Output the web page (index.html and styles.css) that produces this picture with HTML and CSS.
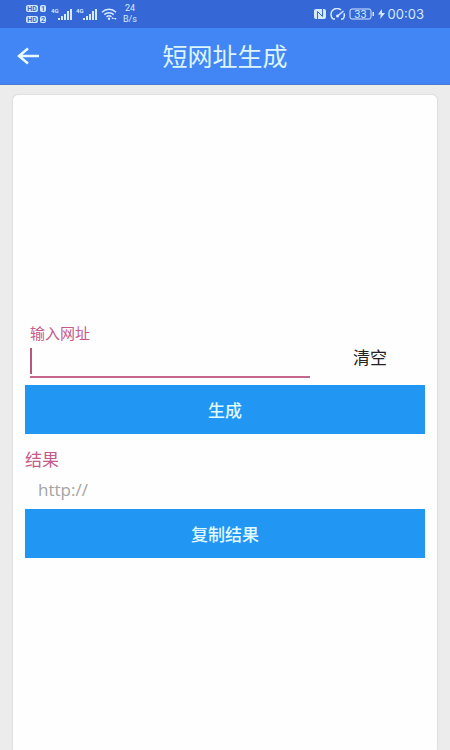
FILE: index.html
```html
<!DOCTYPE html>
<html lang="zh-CN">
<head>
  <meta charset="UTF-8" />
  <meta name="viewport" content="width=device-width, initial-scale=1.0"/>
  <title>短网址生成</title>
  <link rel="stylesheet" href="styles.css">
</head>
<body>

<div class="status-bar">
  <div class="status-left">
    <!-- HD badges -->
    <svg class="icon-hd" width="21" height="20" viewBox="0 0 21 20">
      <g class="badge">
        <rect x="0" y="1" width="12" height="7" rx="2"/>
        <rect x="14" y="1" width="6" height="7" rx="2"/>
        <rect x="0" y="12" width="12" height="7" rx="2"/>
        <rect x="14" y="12" width="6" height="7" rx="2"/>
      </g>
      <g class="badge-text">
        <text x="6" y="7">HD</text>
        <text x="17" y="7">1</text>
        <text x="6" y="18">HD</text>
        <text x="17" y="18">2</text>
      </g>
    </svg>
    <svg width="21" height="14" viewBox="0 0 21 14">
      <text class="net-text" x="0" y="6">4G</text>
      <path class="fill" d="M7 11h2v2H7zM10 9h2v4h-2zM13 7h2v6h-2zM16 4h2v9h-2zM19 2h2v11h-2z"/>
    </svg>
    <svg width="21" height="14" viewBox="0 0 21 14">
      <text class="net-text" x="0" y="6">4G</text>
      <path class="fill" d="M7 11h2v2H7zM10 9h2v4h-2zM13 7h2v6h-2zM16 4h2v9h-2zM19 2h2v11h-2z"/>
    </svg>
    <svg width="16" height="14" viewBox="0 0 16 14">
      <path class="line" d="M1 5.2C5 1.3 11 1.3 15 5.2M3.3 7.6c2.7-2.5 6.7-2.5 9.4 0M5.5 9.8c1.5-1.2 3.5-1.2 5 0"/>
      <circle class="fill" cx="8" cy="11.8" r="1.2"/>
      <path class="fill" d="M10.5 12l1.3-2 1.3 2zM13 11h2.6l-1.3 2z"/>
    </svg>
    <div class="speed"><span>24</span><span>B/s</span></div>
  </div>

  <div class="status-right">
    <svg width="13" height="12" viewBox="0 0 13 12">
      <rect class="fill" x="0" y="1" width="12" height="10" rx="2"/>
      <path class="nfc-gap" d="M3.5 11V3.5l5 5V1"/>
    </svg>
    <svg width="16" height="12" viewBox="0 0 16 12">
      <path class="line" d="M3 11A6 6 0 0 1 11 2M14 5.2A6 6 0 0 1 13 11M3 11h2M11 11h2M7 8.5L13.5 3"/>
      <circle class="fill" cx="7.5" cy="8" r="1.5"/>
    </svg>
    <svg width="26" height="12" viewBox="0 0 26 12">
      <rect class="battery" x="1" y="1" width="21" height="10" rx="2"/>
      <path class="fill" d="M23.5 4H25v4h-1.5z"/>
      <text class="battery-text" x="11.5" y="10">33</text>
    </svg>
    <svg width="7" height="10" viewBox="0 0 7 10">
      <path class="fill" d="M4 0L0 5.5h2.8L2.2 10 7 4H4z"/>
    </svg>
    <time class="clock">00:03</time>
  </div>
</div>

<header class="app-bar">
  <a href="#" class="back" aria-label="返回">
    <svg width="22" height="18" viewBox="0 0 22 18">
      <path d="M22 9H2M11 1.5L2 9l9 7.5"/>
    </svg>
  </a>
  <h1>短网址生成</h1>
</header>

<main class="card">
  <form class="url-form">
    <div class="input-row">
      <div class="field">
        <label for="url">输入网址</label>
        <div class="input-box">
          <input type="text" id="url" autocomplete="off" />
          <span class="caret"></span>
        </div>
      </div>
      <button type="reset" class="clear-button">清空</button>
    </div>
    <button type="button" class="main-button">生成</button>

    <label for="result" class="result-label">结果</label>
    <input type="text" id="result" class="result" placeholder="http://" readonly />
    <button type="button" class="main-button">复制结果</button>
  </form>
</main>

</body>
</html>
```

FILE: styles.css
```css
* {
  box-sizing: border-box;
}

body {
  font-family: Roboto, 'Noto Sans CJK SC', sans-serif;
  background: #ececed;
  margin: 0;
  min-height: 100vh;
  display: flex;
  flex-direction: column;
}

svg {
  display: block;
  flex: none;
}

input,
button {
  font-family: inherit;
  border: none;
  border-radius: 0;
  padding: 0;
  background: none;
}

/* status bar */
.status-bar {
  display: flex;
  justify-content: space-between;
  align-items: center;
  height: 28px;
  padding: 0 26px;
  background: #3568d6;
  color: #d5e9ff;
}

.status-left,
.status-right {
  display: flex;
  align-items: center;
  gap: 4px;
}

.status-right {
  gap: 3px;
}

.badge,
.fill {
  fill: #d5e9ff;
}

.badge-text {
  fill: #3568d6;
  font-size: 7px;
  font-weight: bold;
  text-anchor: middle;
}

.net-text {
  fill: #d5e9ff;
  font-size: 6px;
  font-weight: bold;
}

.line,
.battery {
  fill: none;
  stroke: #d5e9ff;
  stroke-width: 1.5;
}

.battery {
  stroke-width: 1;
}

.battery-text {
  fill: #d5e9ff;
  font-size: 11px;
  text-anchor: middle;
}

.nfc-gap {
  fill: none;
  stroke: #3568d6;
}

.speed {
  display: flex;
  flex-direction: column;
  align-items: center;
  margin-left: 2px;
  font-size: 9px;
  line-height: 11px;
}

.clock {
  font-family: Inter, sans-serif;
  font-size: 13px;
  line-height: 16px;
}

/* app bar */
.app-bar {
  display: grid;
  grid-template-columns: 40px 1fr 40px;
  align-items: center;
  height: 57px;
  padding: 0 17px;
  background: #4285f4;
  border-bottom: 1px solid #4a7bd4;
}

.back path {
  fill: none;
  stroke: #e8fbff;
  stroke-width: 2.5;
}

.app-bar h1 {
  margin: 0;
  padding-top: 4px;
  text-align: center;
  font-size: 25px;
  line-height: 32px;
  font-weight: 400;
  color: #dcf5ff;
}

/* card */
.card {
  flex: 1;
  margin: 10px 13px 0;
  padding: 229px 12px 24px;
  background: #fefefe;
  border-radius: 5px 5px 0 0;
  box-shadow: 0 0 2px rgba(0,0,0,0.2);
}

.url-form {
  display: flex;
  flex-direction: column;
}

.input-row {
  display: flex;
  align-items: flex-end;
  gap: 5px;
  padding-left: 5px;
  margin-bottom: 7px;
}

.field {
  flex: 1;
  min-width: 0;
}

.field label {
  display: block;
  font-size: 15px;
  line-height: 20px;
  color: #c7598b;
}

.input-box {
  position: relative;
}

.input-box input {
  display: block;
  width: 100%;
  height: 34px;
  padding: 0 4px;
  font-size: 17px;
  border-bottom: 2px solid #c4668e;
  outline: none;
}

.caret {
  position: absolute;
  left: 0;
  top: 4px;
  bottom: 4px;
  width: 2px;
  background: #b8567e;
}

.clear-button {
  width: 110px;
  height: 44px;
  font-size: 17px;
  color: #222;
  cursor: pointer;
}

.main-button {
  height: 49px;
  font-size: 17px;
  font-weight: 500;
  color: #e0faff;
  background: #2196f3;
  cursor: pointer;
}

.result-label {
  margin-top: 14px;
  font-size: 17px;
  line-height: 24px;
  color: #c7598b;
}

.result {
  height: 37px;
  padding: 0 13px 2px;
  font-family: 'Open Sans', 'Noto Sans CJK SC', sans-serif;
  font-size: 17px;
  outline: none;
}

.result::placeholder {
  color: #a3a3a3;
  opacity: 1;
}
```
